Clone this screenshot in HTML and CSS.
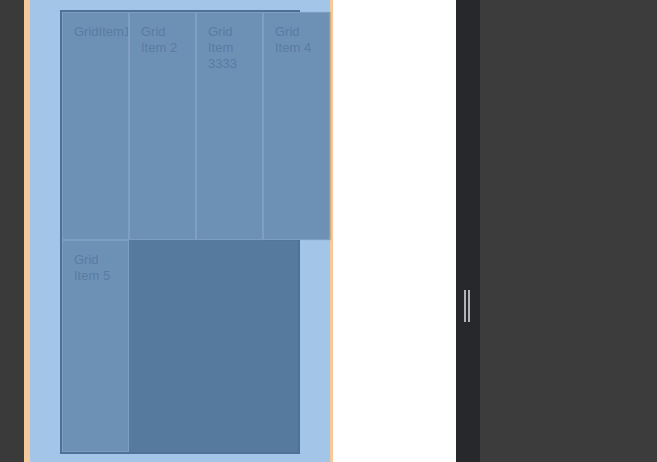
FILE: index.html
```html
<!DOCTYPE html>
<html lang="en">
<head>
<meta charset="UTF-8" />
<meta name="viewport" content="width=device-width, initial-scale=1" />
<title>Grid Overlay</title>
<link rel="stylesheet" href="styles.css">
</head>
<body>
<div class="app">
    <div class="gutter"></div>
    <div class="viewport">
        <div class="margin-box">
            <div class="padding-box">
                <div class="grid">
                    <div class="item">GridItem1</div>
                    <div class="item">Grid Item 2</div>
                    <div class="item">Grid Item 3333</div>
                    <div class="item">Grid Item 4</div>
                    <div class="item">Grid Item 5</div>
                </div>
            </div>
        </div>
    </div>
    <div class="handle-bar">
        <div class="handle"><span></span><span></span></div>
    </div>
    <div class="panel"></div>
</div>
</body>
</html>
```

FILE: styles.css
```css
body {
    margin: 0;
    font-family: "Liberation Sans", Arial, sans-serif;
    background: #3c3c3c;
}
.app {
    display: flex;
    width: 657px;
    height: 462px;
    overflow: hidden;
}
.gutter {
    width: 24px;
    background: #3a3a3a;
}
.viewport {
    width: 432px;
    background: #fff;
}
.margin-box {
    width: 309px;
    height: 462px;
    box-sizing: border-box;
    border-left: 6px solid #f4c99c;
    border-right: 3px solid #f4c99c;
}
.padding-box {
    height: 100%;
    background: #a2c5e8;
    padding: 10px 0 0 30px;
    box-sizing: border-box;
}
.grid {
    width: 240px;
    height: 444px;
    box-sizing: border-box;
    border: 2px solid #4f7198;
    background: #557a9e;
    display: grid;
    grid-template-columns: repeat(4, 67px);
    grid-template-rows: 228px 1fr;
}
.item {
    background: #6d91b5;
    border: 1px solid #7e9fc1;
    color: #5a7ba0;
    font-size: 13px;
    line-height: 16px;
    padding: 11px 11px 0 11px;
    overflow: hidden;
    white-space: normal;
    word-break: keep-all;
}
.item:first-child {
    white-space: nowrap;
}
.item:nth-child(4) {
    box-shadow: 1px 0 1px rgba(0,0,0,0.15);
}
.handle-bar {
    width: 24px;
    background: #27282c;
    display: flex;
    align-items: flex-start;
}
.handle {
    margin: 290px 0 0 8px;
    display: flex;
    gap: 2px;
}
.handle span {
    width: 2px;
    height: 32px;
    background: #b4b4b6;
}
.panel {
    flex: 1;
    background: #3c3c3c;
}
```
